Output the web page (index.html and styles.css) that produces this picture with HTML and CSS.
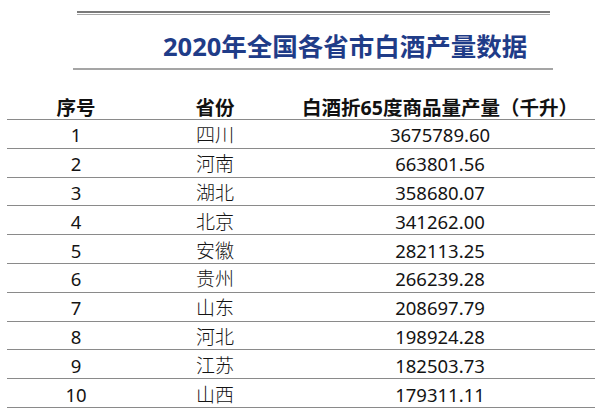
FILE: index.html
```html
<!DOCTYPE html>
<html lang="zh-CN">
<head>
<meta charset="utf-8">
<title>2020年全国各省市白酒产量数据</title>
<link rel="stylesheet" href="styles.css">
</head>
<body>
<div class="page">
  <div class="topline"></div>
  <div class="title-wrap">
    <h1 class="title">2020年全国各省市白酒产量数据</h1>
  </div>
  <div class="table">
    <div class="row head">
      <div class="c1">序号</div>
      <div class="c2">省份</div>
      <div class="c3">白酒折65度商品量产量（千升）</div>
    </div>
    <div class="row"><div class="c1 num">1</div><div class="c2 prov">四川</div><div class="c3 num">3675789.60</div></div>
    <div class="row"><div class="c1 num">2</div><div class="c2 prov">河南</div><div class="c3 num">663801.56</div></div>
    <div class="row"><div class="c1 num">3</div><div class="c2 prov">湖北</div><div class="c3 num">358680.07</div></div>
    <div class="row"><div class="c1 num">4</div><div class="c2 prov">北京</div><div class="c3 num">341262.00</div></div>
    <div class="row"><div class="c1 num">5</div><div class="c2 prov">安徽</div><div class="c3 num">282113.25</div></div>
    <div class="row"><div class="c1 num">6</div><div class="c2 prov">贵州</div><div class="c3 num">266239.28</div></div>
    <div class="row"><div class="c1 num">7</div><div class="c2 prov">山东</div><div class="c3 num">208697.79</div></div>
    <div class="row"><div class="c1 num">8</div><div class="c2 prov">河北</div><div class="c3 num">198924.28</div></div>
    <div class="row"><div class="c1 num">9</div><div class="c2 prov">江苏</div><div class="c3 num">182503.73</div></div>
    <div class="row"><div class="c1 num">10</div><div class="c2 prov">山西</div><div class="c3 num">179311.11</div></div>
  </div>
</div>
</body>
</html>
```

FILE: styles.css
```css
html, body {
  margin: 0;
  padding: 0;
  background: #ffffff;
}
body {
  font-family: "Noto Sans", "Noto Sans CJK SC", sans-serif;
  color: #141414;
  width: 600px;
  height: 410px;
  overflow: hidden;
}
.page {
  padding-top: 11px;
}
.topline {
  margin-left: 77px;
  width: 473px;
  height: 1px;
  border-top: 2px solid #7a7a7a;
  border-bottom: 1px solid #a8a8a8;
}
.title-wrap {
  margin-left: 73px;
  width: 480px;
  height: 53px;
  border-bottom: 2px solid #a5a5a5;
  display: flex;
  align-items: center;
}
.title {
  margin: 0;
  padding-left: 90px;
  padding-top: 8px;
  font-size: 25.5px;
  line-height: 32px;
  font-weight: 700;
  color: #1f3c88;
  white-space: nowrap;
}
.table {
  margin-left: 7px;
  width: 588px;
}
.row {
  display: grid;
  grid-template-columns: 138px 140px 310px;
  height: 27.8px;
  border-bottom: 1px solid #8a8a8a;
  align-items: center;
  text-align: center;
  white-space: nowrap;
}
.row > div {
  padding-top: 3px;
}
.head {
  height: 49px;
  align-items: end;
  font-weight: 700;
  font-size: 19.5px;
  line-height: 20px;
  color: #111;
}
.head > div {
  padding-top: 0;
  padding-bottom: 1px;
}
.num {
  font-size: 18.5px;
  line-height: 22px;
}
.prov {
  font-size: 19px;
  line-height: 22px;
  font-weight: 300;
}
```
